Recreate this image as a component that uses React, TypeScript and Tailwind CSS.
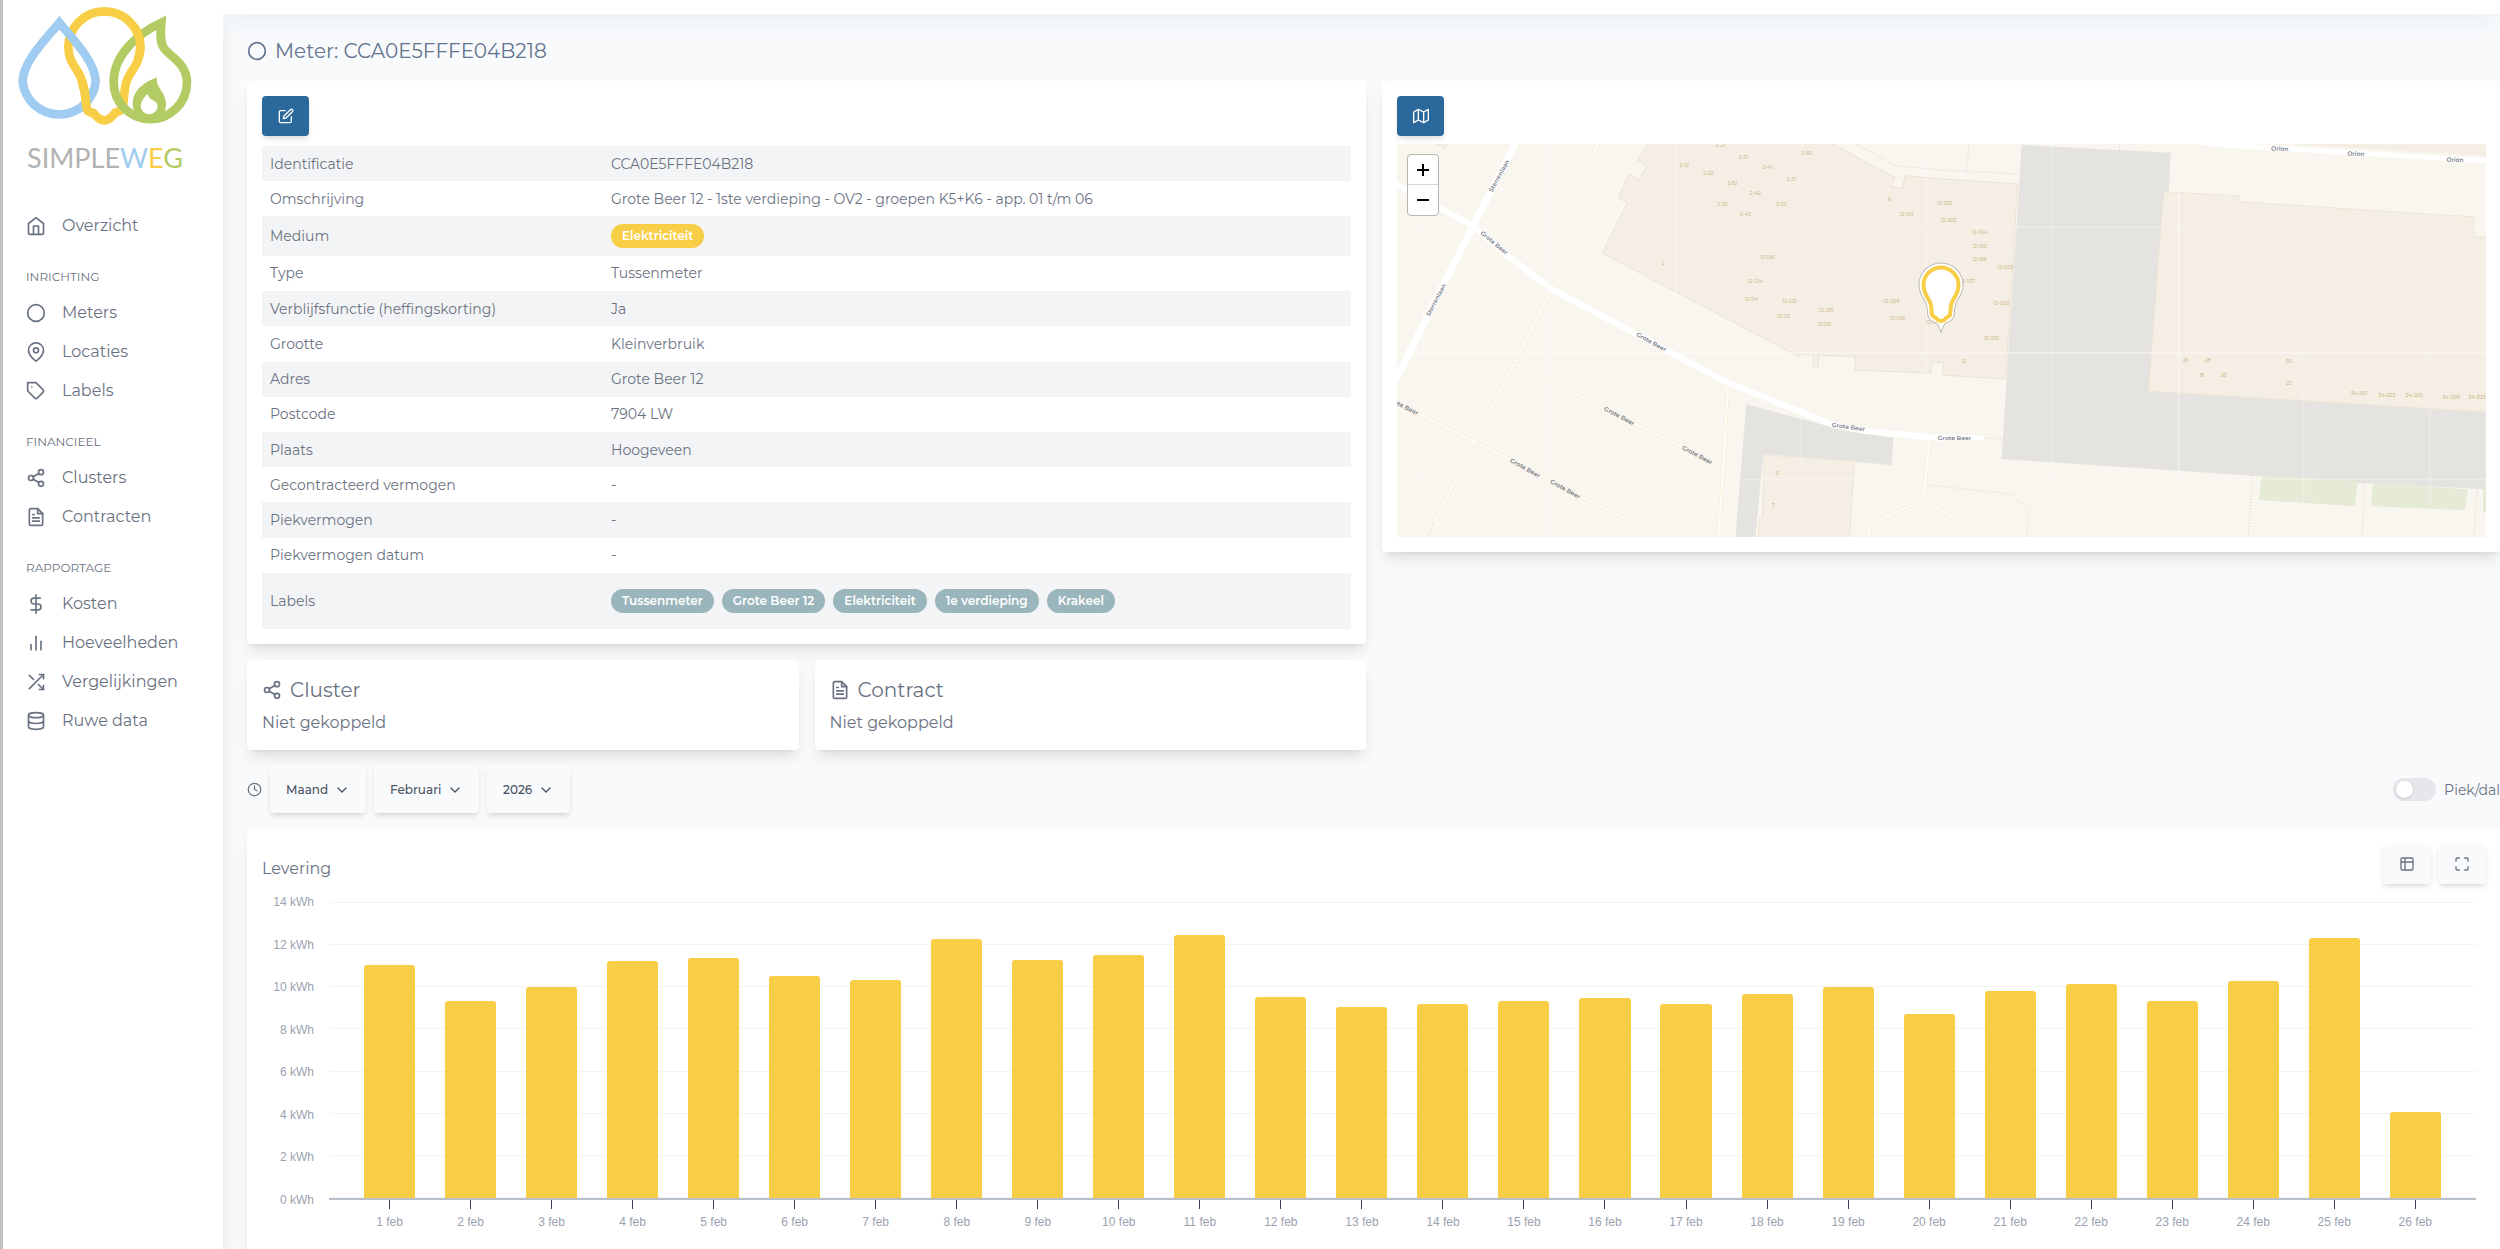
import React from 'react';
import {
  FiBarChart2,
  FiChevronDown,
  FiCircle,
  FiClock,
  FiDatabase,
  FiDollarSign,
  FiEdit,
  FiFileText,
  FiHome,
  FiMap,
  FiMapPin,
  FiMaximize,
  FiShare2,
  FiShuffle,
  FiTag,
} from 'react-icons/fi';
import type { IconType } from 'react-icons';

type NavItem = { label: string; icon: IconType };
type NavGroup = { title?: string; items: NavItem[] };

const navGroups: NavGroup[] = [
  { items: [{ label: 'Overzicht', icon: FiHome }] },
  {
    title: 'INRICHTING',
    items: [
      { label: 'Meters', icon: FiCircle },
      { label: 'Locaties', icon: FiMapPin },
      { label: 'Labels', icon: FiTag },
    ],
  },
  {
    title: 'FINANCIEEL',
    items: [
      { label: 'Clusters', icon: FiShare2 },
      { label: 'Contracten', icon: FiFileText },
    ],
  },
  {
    title: 'RAPPORTAGE',
    items: [
      { label: 'Kosten', icon: FiDollarSign },
      { label: 'Hoeveelheden', icon: FiBarChart2 },
      { label: 'Vergelijkingen', icon: FiShuffle },
      { label: 'Ruwe data', icon: FiDatabase },
    ],
  },
];

const labels = ['Tussenmeter', 'Grote Beer 12', 'Elektriciteit', '1e verdieping', 'Krakeel'];

const levering = [
  11.02, 9.32, 10.0, 11.2, 11.34, 10.5, 10.33, 12.26, 11.26, 11.48, 12.45, 9.53, 9.04, 9.18, 9.34, 9.46, 9.18, 9.67,
  10.0, 8.71, 9.81, 10.14, 9.32, 10.28, 12.29, 4.07,
];
const MAX_KWH = 14;
const ticks = [14, 12, 10, 8, 6, 4, 2, 0];

const Pill = ({ className, children }: { className: string; children: React.ReactNode }) => (
  <span className={`inline-block h-6 rounded-full px-[11px] text-xs leading-6 font-semibold text-white ${className}`}>
    {children}
  </span>
);

const rows: [string, React.ReactNode][] = [
  ['Identificatie', 'CCA0E5FFFE04B218'],
  ['Omschrijving', 'Grote Beer 12 - 1ste verdieping - OV2 - groepen K5+K6 - app. 01 t/m 06'],
  ['Medium', <Pill className="bg-[#f8ce46]">Elektriciteit</Pill>],
  ['Type', 'Tussenmeter'],
  ['Verblijfsfunctie (heffingskorting)', 'Ja'],
  ['Grootte', 'Kleinverbruik'],
  ['Adres', 'Grote Beer 12'],
  ['Postcode', '7904 LW'],
  ['Plaats', 'Hoogeveen'],
  ['Gecontracteerd vermogen', '-'],
  ['Piekvermogen', '-'],
  ['Piekvermogen datum', '-'],
  [
    'Labels',
    <div className="flex flex-wrap gap-2 py-2">
      {labels.map((label) => (
        <Pill key={label} className="bg-[#9ab5bc]">
          {label}
        </Pill>
      ))}
    </div>,
  ],
];

const Logo = () => (
  <div className="flex flex-col items-center pr-4">
    <svg viewBox="48 12 534 372" className="h-[124px] w-[178px]" fill="none" strokeWidth="26">
      <path
        d="M205 142A108 108 0 0 1 421 142C421 195 386 215 378 250C372 275 372 300 368 322C366 334 356 335 346 338C338 346 331 361 313 361C295 361 288 346 280 339C264 336 260 332 259 320C258 290 252 262 245 240C235 205 205 190 205 142Z"
        stroke="#f8ce46"
      />
      <path d="M178 68C140 115 68 185 68 245A110 109 0 0 0 287 245C287 185 216 115 178 68Z" stroke="#9fccf0" />
      <path
        d="M484 68C420 98 341 160 341 245A110 111 0 0 0 561 248C561 190 510 170 492 145C478 125 482 95 484 68Z"
        stroke="#b3cb63"
      />
      <path d="M245 240C252 262 258 290 259 320C260 332 264 336 280 339" stroke="#f8ce46" />
      <path d="M402 80C414 96 421 118 421 142C421 158 418 170 412 182" stroke="#f8ce46" />
      <path
        d="M471 232C465 262 498 275 498 312L494 345L450 358L402 335C386 280 425 250 471 232Z"
        fill="#b3cb63"
      />
      <path d="M442 281C428 298 422 308 422 319A25 24 0 0 0 473 318C472 300 448 302 442 281Z" fill="#fff" />
    </svg>
    <div className="mt-2 text-[27px] leading-[44px] font-normal font-[Lato,sans-serif]">
      <span className="text-[#b2b2b2]">SIMPLE</span>
      <span className="text-[#9fccf0]">W</span>
      <span className="text-[#f8ce46]">E</span>
      <span className="text-[#b3cb63]">G</span>
    </div>
  </div>
);

const Sidebar = () => (
  <aside className="relative z-10 w-[223px] shrink-0 border-l-[3px] border-[#c2c2c2] bg-white pt-1 shadow-xl">
    <Logo />
    <nav className="mt-[26px] px-[23px] text-gray-500">
      {navGroups.map((group, i) => (
        <div key={i}>
          {group.title && <h2 className="pt-6 pb-2 text-xs leading-4">{group.title}</h2>}
          <ul>
            {group.items.map(({ label, icon: Icon }) => (
              <li key={label}>
                <a href="#" className="flex h-[39px] items-center gap-4 text-base">
                  <Icon className="size-5" />
                  {label}
                </a>
              </li>
            ))}
          </ul>
        </div>
      ))}
    </nav>
  </aside>
);

// Huisnummers: [x, y, tekst]
const houseNumbers: [number, number, string][] = [
  [323, 1, '2-21'],
  [346, 13, '2-31'],
  [409, 9, '2-50'],
  [287, 21, '2-12'],
  [311, 29, '2-22'],
  [370, 23, '2-41'],
  [394, 35, '2-51'],
  [335, 39, '2-32'],
  [358, 49, '2-42'],
  [325, 60, '2-33'],
  [384, 60, '2-52'],
  [348, 70, '2-43'],
  [492, 55, '6'],
  [509, 70, '12-101'],
  [547, 59, '12-103'],
  [551, 76, '12-203'],
  [582, 88, '12-104'],
  [582, 102, '12-105'],
  [582, 115, '12-106'],
  [608, 123, '12-003'],
  [570, 137, '12-107'],
  [604, 159, '12-002'],
  [594, 194, '12-001'],
  [566, 217, '12'],
  [266, 119, '2'],
  [370, 113, '12-196'],
  [358, 137, '12-214'],
  [354, 155, '12-114'],
  [392, 157, '12-212'],
  [386, 172, '12-112'],
  [429, 166, '12-210'],
  [427, 180, '12-110'],
  [494, 157, '12-208'],
  [500, 174, '12-109'],
  [536, 178, '12-108'],
  [788, 216, '26'],
  [810, 216, '28'],
  [804, 231, '18'],
  [826, 231, '20'],
  [891, 217, '30'],
  [891, 239, '22'],
  [961, 249, '34-201'],
  [989, 251, '34-203'],
  [1016, 251, '34-205'],
  [1053, 253, '34-208'],
  [1079, 253, '34-303'],
  [380, 329, '5'],
  [376, 361, '7'],
];

// Straatnamen: [x, y, hoek, tekst]
const streetNames: [number, number, number, string][] = [
  [102, 32, -61, 'Sterrenlaan'],
  [39, 156, -62, 'Sterrenlaan'],
  [97, 99, 40, 'Grote Beer'],
  [254, 198, 29, 'Grote Beer'],
  [222, 272, 28, 'Grote Beer'],
  [300, 311, 28, 'Grote Beer'],
  [128, 324, 29, 'Grote Beer'],
  [168, 345, 29, 'Grote Beer'],
  [6, 262, 27, 'Grote Beer'],
  [451, 283, 8, 'Grote Beer'],
  [557, 294, 0, 'Grote Beer'],
  [882, 5, 2, 'Orion'],
  [958, 10, 2, 'Orion'],
  [1057, 16, 3, 'Orion'],
];

const paths =
  'M154 146L117 220L77 297L38 378L68 394M117 220L325 323M-2 258L77 297L265 394M331 240L326 323L321 394M532 296L526 356L472 380L471 396M526 356L542 366L577 387V396M202 -2L184 37';

const MeterMap = () => (
  <div className="relative mt-2 h-[393px] overflow-hidden bg-[#f9f6ef]">
    <svg viewBox="0 0 1088 393" preserveAspectRatio="xMidYMid slice" className="size-full" fill="none">
      <g fill="#f5eee4" stroke="#ebe2d3" strokeWidth="1">
        <path d="M38 -2L40 0L48 5L51 -2Z" />
        <path d="M251 -2L241 17L250 22L242 36L232 30L221 54L230 59L205 109L402 213L404 210L416 211V222H421V211L458 213L457 226L533 229L535 218L546 219L545 231L608 235L620 40L542 35L508 32L505 44L493 43L498 34L431 -2Z" />
        <path d="M849 -2L1090 12V-2Z" stroke="none" />
      </g>
      <path
        d="M624 1L773 9L771 48H766L751 247L1088 268V345L1069 344L967 339L604 315ZM349 260L441 285L496 294L494 321L366 310L358 394H338Z"
        fill="#e4e3e0"
      />
      <g fill="#f5eee4" stroke="#efe5d6" strokeWidth="1">
        <path d="M766 48L842 52V58L1076 73V93H1090V268L751 247Z" />
        <path d="M367 311L457 317L452 396H361L362 373H365Z" />
      </g>
      <path
        d="M864 331L960 337L957 362L861 356ZM975 339L1070 345L1067 366L973 362ZM1085 345H1088V368H1085Z"
        fill="#e5ebd6"
      />
      <path
        d="M456 -1L498 22L542 26L621 30M571 0L570 28M722 0V7M588 294L606 295M529 341L542 342L614 350L631 366L629 394M855 331L850 394M967 339L964 394M1079 345L1076 394M38 378L29 394"
        stroke="#d5d3d6"
        strokeDasharray="1 2"
      />
      <path d={paths} stroke="#f8e9cd" strokeWidth="3" />
      <path d={paths} stroke="#fffdf8" strokeWidth="2" />
      <g stroke="#fff" strokeLinejoin="round">
        <path d="M119 -2L76 82L-2 237" strokeWidth="7" />
        <path d="M-2 40L41 63L76 82L112 113L154 145L329 238L436 281L468 287L542 294" strokeWidth="6" />
        <path d="M540 294H584" strokeWidth="5" strokeLinecap="round" />
        <path d="M790 -3L821 1L1090 17" strokeWidth="5" />
      </g>
      <path d="M152 0V393M781 0V393M0 209H1088" stroke="#fff" strokeOpacity=".7" />
      <path
        d="M26 0V393M278 0V393M404 0V393M529 0V393M655 0V393M906 0V393M1032 0V393M0 83H1088M0 335H1088"
        stroke="#fff"
        strokeOpacity=".4"
      />
      <g fontSize="5" fontWeight="500" fill="#cdb98c" textAnchor="middle">
        {houseNumbers.map(([x, y, text]) => (
          <text key={`${x}-${y}`} x={x} y={y + 2}>
            {text}
          </text>
        ))}
      </g>
      <g fontSize="6" fontWeight="600" fill="#777a88" textAnchor="middle">
        {streetNames.map(([x, y, angle, text]) => (
          <text key={`${x}-${y}`} x={x} y={y + 2} transform={`rotate(${angle} ${x} ${y})`}>
            {text}
          </text>
        ))}
      </g>
      {/* Marker */}
      <g transform="translate(543.5 119)">
        <path
          d="M-22 22A22 22 0 0 1 22 22C22 33 15 36 14 44L13 53C12 57 8 59 5 60C2 62 1 66 0 70C-1 66 -2 62 -5 60C-8 59 -12 57 -13 53L-14 44C-15 36 -22 33 -22 22Z"
          fill="#fff"
          stroke="#bdb9b2"
        />
        <path
          d="M-17.5 22A17.5 17.5 0 0 1 17.5 22C17.5 32 11 36 10 42L9 52C8 54 6 54 5 55C3 59 -3 59 -5 55C-6 54 -8 54 -9 52L-10 42C-11 36 -17.5 32 -17.5 22Z"
          fill="#fff"
          stroke="#f8ce46"
          strokeWidth="4"
        />
      </g>
    </svg>
    <div className="absolute top-[10px] left-[10px] w-8 overflow-hidden rounded border border-[#b9b6b1] bg-white text-black">
      <button aria-label="Zoom in" className="flex h-[30px] w-full items-center justify-center border-b border-gray-300">
        <svg viewBox="0 0 12 12" className="size-3" stroke="currentColor" strokeWidth="2">
          <path d="M6 0v12M0 6h12" />
        </svg>
      </button>
      <button aria-label="Zoom out" className="flex h-[30px] w-full items-center justify-center">
        <svg viewBox="0 0 12 12" className="size-3" stroke="currentColor" strokeWidth="2">
          <path d="M0 6h12" />
        </svg>
      </button>
    </div>
  </div>
);

const Card = ({ className = '', children }: { className?: string; children: React.ReactNode }) => (
  <section className={`rounded bg-white p-[15px] shadow-lg ${className}`}>{children}</section>
);

const PrimaryButton = ({ label, icon: Icon }: { label: string; icon: IconType }) => (
  <button
    aria-label={label}
    className="flex h-10 w-[47px] items-center justify-center rounded bg-[#2b689c] text-white shadow-md"
  >
    <Icon className="size-4" />
  </button>
);

const LinkCard = ({ title, icon: Icon }: { title: string; icon: IconType }) => (
  <Card>
    <h2 className="flex items-center gap-2 text-xl leading-[30px]">
      <Icon className="size-5" />
      {title}
    </h2>
    <p className="mt-1.5 text-base leading-6">Niet gekoppeld</p>
  </Card>
);

const Filter = ({ label, value, className }: { label: string; value: string; className: string }) => (
  <div className="relative">
    <select
      aria-label={label}
      defaultValue={value}
      className={`h-[47px] appearance-none rounded bg-gray-50 pl-4 text-xs font-medium text-gray-600 shadow-md ${className}`}
    >
      <option>{value}</option>
    </select>
    <FiChevronDown className="pointer-events-none absolute inset-y-0 right-4 my-auto size-4 text-gray-600" />
  </div>
);

const TableIcon = () => (
  <svg viewBox="0 0 24 24" className="size-4" fill="none" stroke="currentColor" strokeWidth="2">
    <rect x="3" y="3" width="18" height="18" rx="2" />
    <path d="M3 9h18M9 3v18" />
  </svg>
);

const LeveringChart = () => (
  <div className="mt-[18px] flex gap-[15px] pr-[10px] font-['Liberation_Sans',Arial,sans-serif] text-xs text-gray-400">
    <div className="-my-2 flex h-[314px] w-[52px] flex-col justify-between text-right leading-4">
      {ticks.map((tick) => (
        <span key={tick}>{tick} kWh</span>
      ))}
    </div>
    <div className="flex-1">
      <div className="relative h-[298px] border-b-2 border-[#b9c0c8]">
        <div className="absolute inset-0 flex flex-col justify-between">
          {ticks.map((tick) => (
            <div key={tick} className="h-px bg-gray-100" />
          ))}
        </div>
        <div className="relative flex h-full items-end px-5">
          {levering.map((kwh, day) => (
            <div key={day} className="flex h-full flex-1 items-end justify-center">
              <div className="w-[63%] rounded-t-[3px] bg-[#f8ce46]" style={{ height: `${(kwh / MAX_KWH) * 100}%` }} />
            </div>
          ))}
        </div>
      </div>
      <div className="flex px-5">
        {levering.map((_, day) => (
          <div key={day} className="flex flex-1 flex-col items-center">
            <span className="h-[9px] w-px bg-gray-700" />
            <span className="mt-[5px] leading-4">{day + 1} feb</span>
          </div>
        ))}
      </div>
    </div>
  </div>
);

const App: React.FC = () => (
  <div className="flex h-screen overflow-hidden bg-[#f8fafc] font-[Montserrat,Inter,sans-serif] text-gray-500">
    <Sidebar />
    <div className="min-w-0 flex-1">
      <header className="h-[14px] bg-white shadow-lg shadow-slate-200/60" />
      <main className="-mr-px pt-[23px] pl-6">
        <h1 className="mb-4 flex items-center gap-2 text-xl leading-7 text-slate-500">
          <FiCircle className="size-5" />
          Meter: CCA0E5FFFE04B218
        </h1>

        <div className="grid grid-cols-2 items-start gap-4">
          <div className="grid grid-cols-2 gap-4">
            <Card className="col-span-2">
              <PrimaryButton label="Bewerken" icon={FiEdit} />
              <table className="mt-[10px] h-[483px] w-full text-sm">
                <tbody>
                  {rows.map(([name, value]) => (
                    <tr key={name} className="odd:bg-gray-100">
                      <th scope="row" className="w-[341px] px-2 text-left font-normal">
                        {name}
                      </th>
                      <td className="px-2 py-[7px]">{value}</td>
                    </tr>
                  ))}
                </tbody>
              </table>
            </Card>
            <LinkCard title="Cluster" icon={FiShare2} />
            <LinkCard title="Contract" icon={FiFileText} />
          </div>
          <Card>
            <PrimaryButton label="Kaart" icon={FiMap} />
            <MeterMap />
          </Card>
        </div>

        <div className="my-4 flex items-center gap-2">
          <FiClock className="size-[15px]" />
          <Filter label="Periode" value="Maand" className="w-24" />
          <Filter label="Maand" value="Februari" className="w-[105px]" />
          <Filter label="Jaar" value="2026" className="w-[83px]" />
          <label className="ml-auto flex items-center gap-2 pr-px text-sm whitespace-nowrap">
            <input
              type="checkbox"
              className="h-[23px] w-[43px] appearance-none rounded-full bg-gray-200 p-[3px] before:block before:size-[17px] before:rounded-full before:bg-white before:shadow-sm"
            />
            <span>Piek/dal</span>
          </label>
        </div>

        <Card>
          <div className="flex items-center gap-[7px]">
            <h2 className="flex-1 pt-2.5 text-base leading-6">Levering</h2>
            <button
              aria-label="Tabel"
              className="flex h-10 w-12 items-center justify-center rounded bg-gray-50 shadow-md"
            >
              <TableIcon />
            </button>
            <button
              aria-label="Volledig scherm"
              className="flex h-10 w-12 items-center justify-center rounded bg-gray-50 shadow-md"
            >
              <FiMaximize className="size-4" />
            </button>
          </div>
          <LeveringChart />
          <div className="h-8" />
        </Card>
      </main>
    </div>
  </div>
);

export default App;
